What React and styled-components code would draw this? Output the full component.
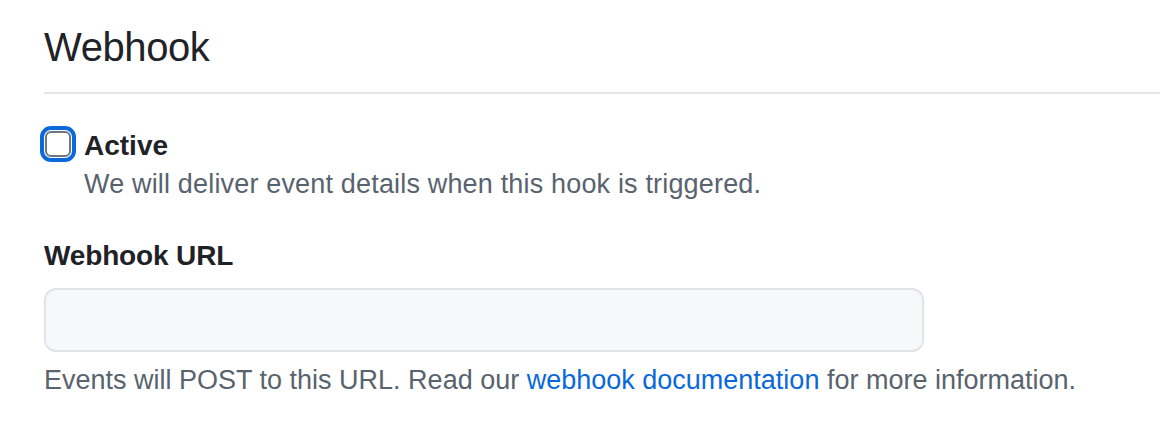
import React, {useState} from 'react';
import styled, {createGlobalStyle} from "styled-components";

const GlobalStyle = createGlobalStyle`
  body {
    margin: 0;
    background: #ffffff;
    font-family: "Liberation Sans", Arial, sans-serif;
    color: #1f2328;
  }
`;

const App = () => {
    const [active, setActive] = useState(false);
    const [url, setUrl] = useState('');

    return (
        <>
            <GlobalStyle/>
            <SettingsWrap>
                <SubheadTitle>Webhook</SubheadTitle>

                <CheckboxRow>
                    <Checkbox
                        type="checkbox"
                        checked={active}
                        onChange={(e) => setActive(e.target.checked)}
                        id="hook-active"
                    />
                    <CheckboxBody>
                        <CheckboxLabel htmlFor="hook-active">Active</CheckboxLabel>
                        <Note $spacing={0.17}>We will deliver event details when this hook is triggered.</Note>
                    </CheckboxBody>
                </CheckboxRow>

                <FieldLabel htmlFor="hook-url">Webhook URL</FieldLabel>
                <UrlInput
                    id="hook-url"
                    type="text"
                    value={url}
                    onChange={(e) => setUrl(e.target.value)}
                />
                <Note>
                    Events will POST to this URL. Read our <DocLink href="#">webhook documentation</DocLink> for more information.
                </Note>
            </SettingsWrap>
        </>
    );
};

export default App;


const SettingsWrap = styled.div`
  padding-left: 44px;
`;

const SubheadTitle = styled.h2`
  margin: 0;
  padding: 17px 0 15px;
  font-size: 40px;
  line-height: 60px;
  font-weight: 400;
  letter-spacing: -0.4px;
  color: #1f2328;
  border-bottom: 2px solid #e4e6e9;
`;

const CheckboxRow = styled.div`
  display: flex;
  align-items: flex-start;
  margin-top: 32px;
`;

const Checkbox = styled.input`
  appearance: none;
  box-sizing: border-box;
  width: 26px;
  height: 26px;
  margin: 5px 13px 0 1px;
  flex-shrink: 0;
  border: 2px solid #6e7781;
  border-radius: 6px;
  background: #ffffff;
  outline: 4px solid #0969da;
  outline-offset: 1px;
`;

const CheckboxBody = styled.div`
  display: flex;
  flex-direction: column;
`;

const CheckboxLabel = styled.label`
  font-size: 28px;
  line-height: 40px;
  font-weight: 700;
  color: #1f2328;
`;

const Note = styled.p`
  margin: 0;
  font-size: 27px;
  line-height: 36px;
  letter-spacing: ${({$spacing}) => $spacing || 0}px;
  color: #59636e;
`;

const FieldLabel = styled.label`
  display: block;
  margin-top: 34px;
  font-size: 28px;
  line-height: 40px;
  font-weight: 700;
  letter-spacing: -0.15px;
  color: #1f2328;
`;

const UrlInput = styled.input`
  display: block;
  box-sizing: border-box;
  width: 880px;
  height: 64px;
  margin: 12px 0 10px;
  padding: 0 24px;
  font-family: inherit;
  font-size: 28px;
  color: #1f2328;
  background: #f6f8fa;
  border: 2px solid #e0e3e7;
  border-radius: 12px;
  outline: none;
`;

const DocLink = styled.a`
  color: #0969da;
  text-decoration: none;
`;
